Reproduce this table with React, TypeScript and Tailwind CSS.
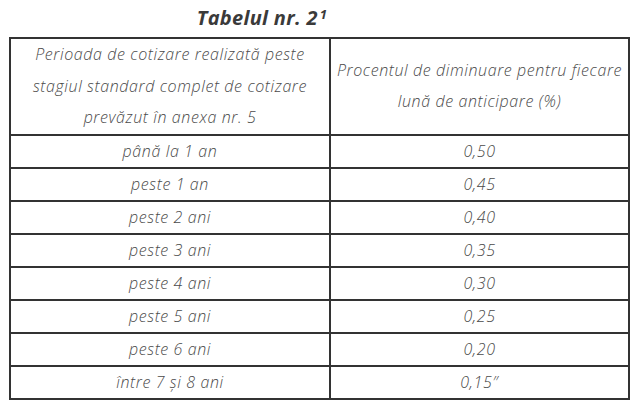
import React from "react";

const rows: [string, string][] = [
  ["până la 1 an", "0,50"],
  ["peste 1 an", "0,45"],
  ["peste 2 ani", "0,40"],
  ["peste 3 ani", "0,35"],
  ["peste 4 ani", "0,30"],
  ["peste 5 ani", "0,25"],
  ["peste 6 ani", "0,20"],
  ["între 7 și 8 ani", "0,15\u2033"],
];

export default function App() {
  return (
    <div
      className="w-[640px] h-[403px] bg-white overflow-hidden"
      style={{ fontFamily: '"Open Sans", "Liberation Sans", sans-serif' }}
    >
      <div className="h-[37px] flex items-start justify-center pt-[5px] pr-[116px]">
        <span className="text-[20px] font-bold italic text-[#3a3a3a] leading-[26px] tracking-[0.3px]">
          Tabelul nr. 2
          <span className="text-[13px] align-top relative top-[-4px] ml-[2px]">1</span>
        </span>
      </div>
      <table className="ml-[9px] w-[621px] border-collapse text-[#4a4a4a] italic font-light text-[16px] tracking-[0.6px]">
        <tbody>
          <tr className="h-[96px]">
            <td className="w-[320px] border-2 border-[#333] text-center leading-[31.5px] px-0 whitespace-nowrap">
              Perioada de cotizare realizată peste
              <br />
              stagiul standard complet de cotizare
              <br />
              prevăzut în anexa nr. 5
            </td>
            <td className="border-2 border-[#333] text-center leading-[31.5px] px-0 whitespace-nowrap">
              Procentul de diminuare pentru fiecare
              <br />
              lună de anticipare (%)
            </td>
          </tr>
          {rows.map(([a, b]) => (
            <tr key={a} className="h-[33px]">
              <td className="border-2 border-[#333] text-center leading-[28px]">{a}</td>
              <td className="border-2 border-[#333] text-center leading-[28px]">{b}</td>
            </tr>
          ))}
        </tbody>
      </table>
    </div>
  );
}
